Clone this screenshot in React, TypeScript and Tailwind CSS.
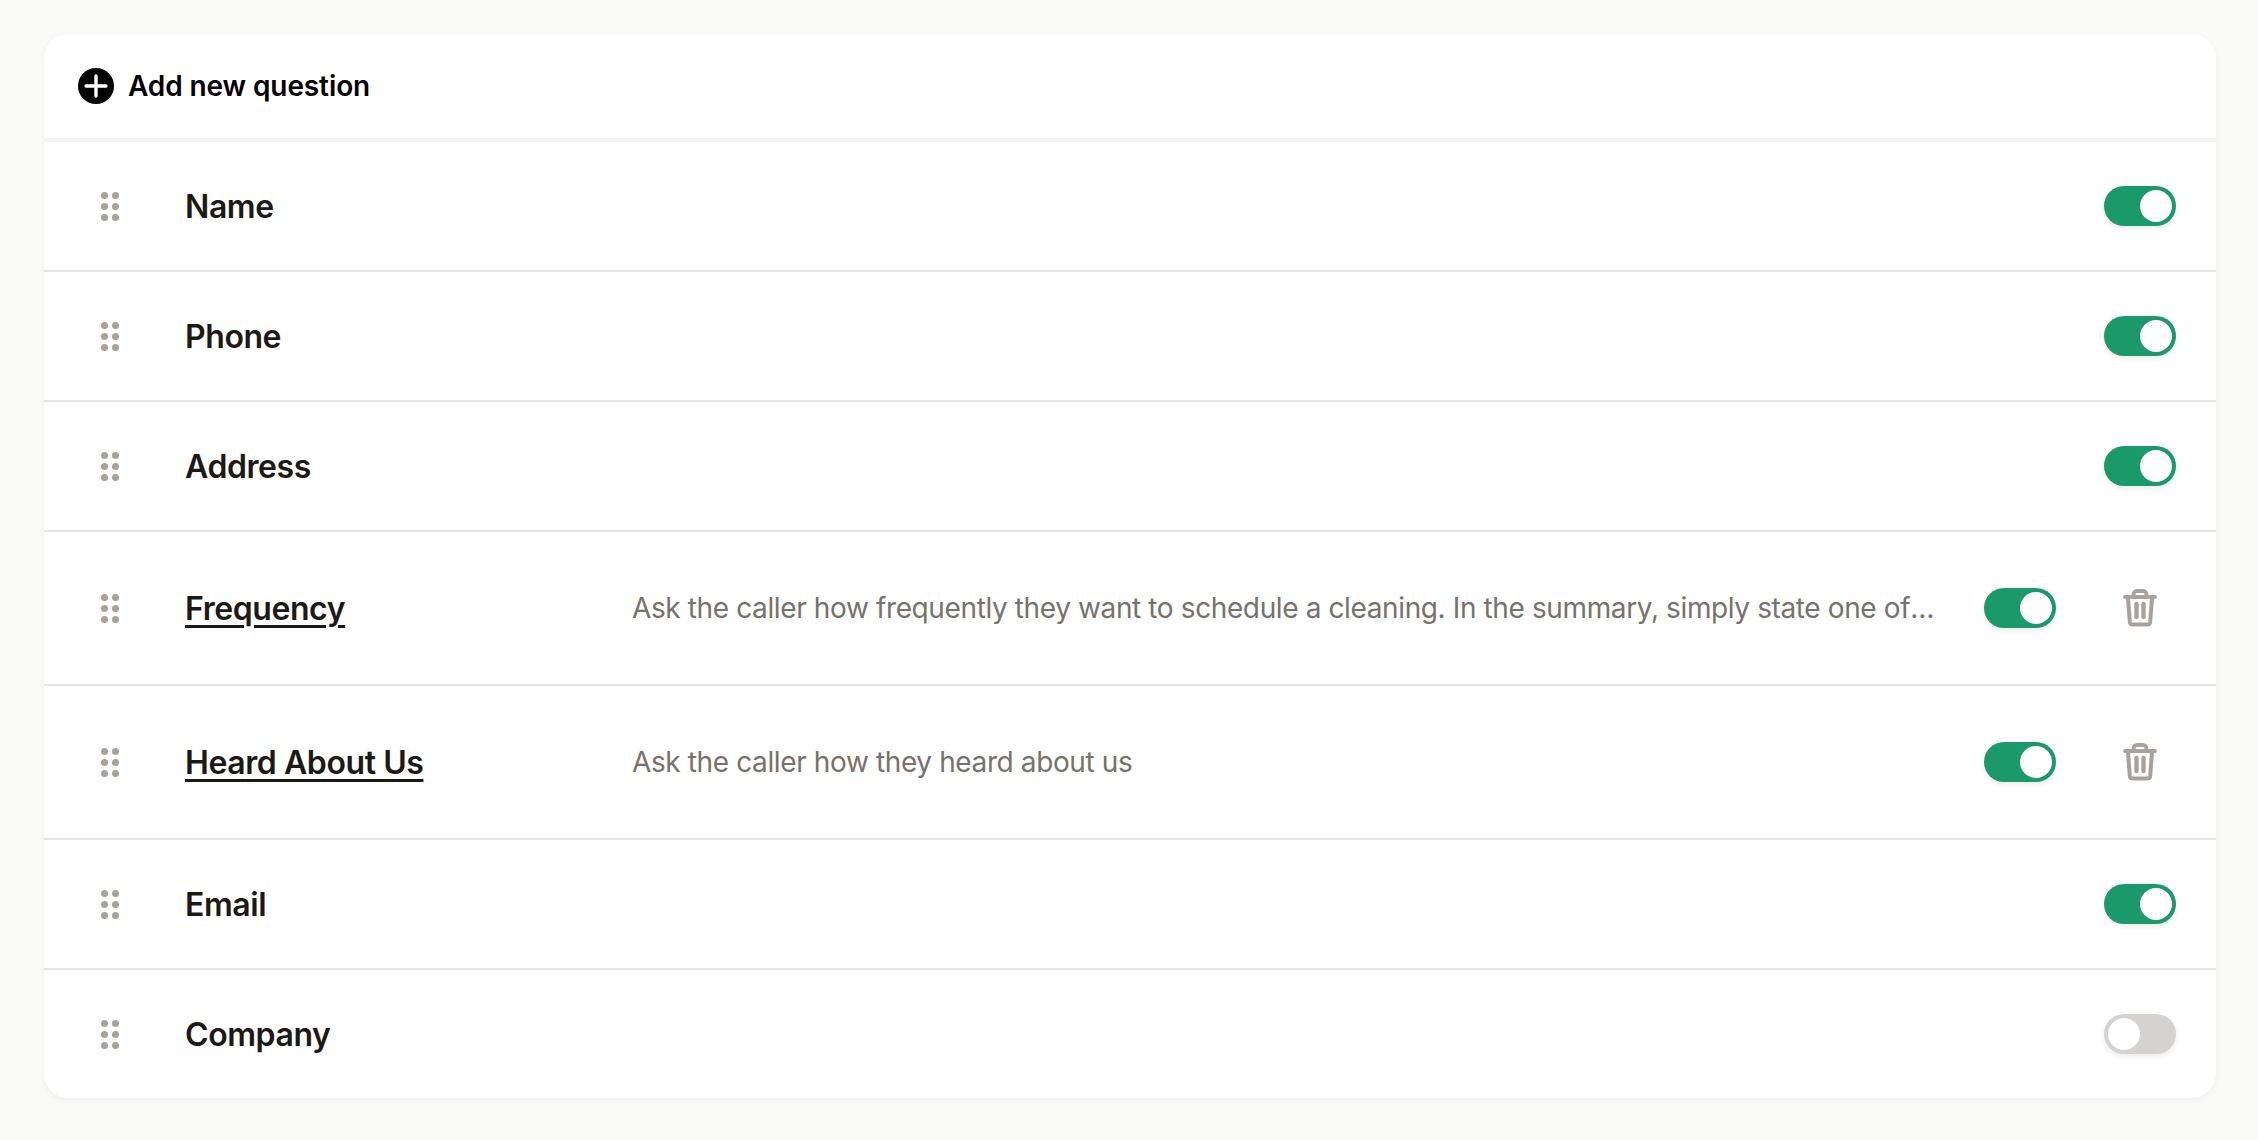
const FONT = "font-['Inter',sans-serif]"

const questions = [
  { id: 'name', label: 'Name', enabled: true },
  { id: 'phone', label: 'Phone', enabled: true },
  { id: 'address', label: 'Address', enabled: true },
  {
    id: 'frequency',
    label: 'Frequency',
    enabled: true,
    custom: true,
    description:
      'Ask the caller how frequently they want to schedule a cleaning. In the summary, simply state one of the following options: weekly, biweekly, monthly or one time.',
  },
  {
    id: 'heard',
    label: 'Heard About Us',
    enabled: true,
    custom: true,
    description: 'Ask the caller how they heard about us',
  },
  { id: 'email', label: 'Email', enabled: true },
  { id: 'company', label: 'Company', enabled: false },
]

function GripIcon() {
  return (
    <svg width="18" height="29" viewBox="0 0 18 29" fill="#a8a29e" className="shrink-0">
      <circle cx="3.5" cy="3.5" r="3.5" />
      <circle cx="14.5" cy="3.5" r="3.5" />
      <circle cx="3.5" cy="14.5" r="3.5" />
      <circle cx="14.5" cy="14.5" r="3.5" />
      <circle cx="3.5" cy="25.5" r="3.5" />
      <circle cx="14.5" cy="25.5" r="3.5" />
    </svg>
  )
}

function PlusIcon() {
  return (
    <svg width="36" height="36" viewBox="0 0 36 36" className="shrink-0">
      <circle cx="18" cy="18" r="18" fill="#000" />
      <path d="M18 8v20M8 18h20" stroke="#fff" strokeWidth="3.4" strokeLinecap="round" />
    </svg>
  )
}

function TrashIcon() {
  return (
    <svg width="34" height="38" viewBox="0 0 34 38" fill="none" stroke="#a8a29e" strokeLinecap="round" strokeLinejoin="round">
      <path d="M2 8h30" strokeWidth="3.8" />
      <path d="M10.5 7V5.5A3.5 3.5 0 0 1 14 2h6a3.5 3.5 0 0 1 3.5 3.5V7" strokeWidth="3.8" />
      <path d="M5 9l1.8 24a3 3 0 0 0 3 2.6h14.4a3 3 0 0 0 3-2.6L29 9" strokeWidth="4" />
      <path d="M13.5 15v13M20.5 15v13" strokeWidth="4.4" />
    </svg>
  )
}

function Toggle({ on }: { on: boolean }) {
  return (
    <div
      className={`flex h-10 w-[72px] shrink-0 items-center rounded-full p-1 shadow-[0_3px_5px_rgba(0,0,0,0.07)] ${
        on ? 'justify-end bg-[#1a996b]' : 'justify-start bg-[#d4d3d1]'
      }`}
    >
      <div className="h-8 w-8 rounded-full bg-white"></div>
    </div>
  )
}

export default function App() {
  return (
    <div className={`h-[1140px] w-[2258px] bg-[#fafaf9] px-[44px] pt-[34px] ${FONT}`}>
      <div className="w-[2172px] overflow-hidden rounded-[24px] bg-white shadow-[0_2px_6px_rgba(0,0,0,0.05)]">
        {/* Header */}
        <div className="flex h-[108px] items-center gap-[14px] border-b-4 border-[#f5f5f4] pl-[34px] text-[28px] font-semibold tracking-[-0.1px] text-black">
          <PlusIcon />
          <span>Add new question</span>
        </div>

        {/* Question rows */}
        {questions.map((question, index) => {
          const isLast = index === questions.length - 1
          return (
            <div
              key={question.id}
              className={`flex items-center pl-[57px] pr-[40px] ${
                isLast ? 'h-[128px]' : question.custom ? 'h-[154px] border-b-2 border-[#e7e5e4]' : 'h-[130px] border-b-2 border-[#e7e5e4]'
              }`}
            >
              <GripIcon />
              <div className="ml-[66px] w-[447px] shrink-0 pt-[2px] text-[32px] font-semibold tracking-[-0.42px] text-[#1c1917]">
                {question.custom ? (
                  <span className="underline decoration-[3px] underline-offset-[5px]">{question.label}</span>
                ) : (
                  question.label
                )}
              </div>
              <div className="w-[1303px] truncate text-[28px] tracking-[-0.38px] text-[#78716c]">{question.description}</div>
              {question.custom ? (
                <div className="ml-auto flex items-center">
                  <Toggle on={question.enabled} />
                  <div className="ml-[48px] flex w-[72px] justify-center">
                    <TrashIcon />
                  </div>
                </div>
              ) : (
                <div className="ml-auto">
                  <Toggle on={question.enabled} />
                </div>
              )}
            </div>
          )
        })}
      </div>
    </div>
  )
}
